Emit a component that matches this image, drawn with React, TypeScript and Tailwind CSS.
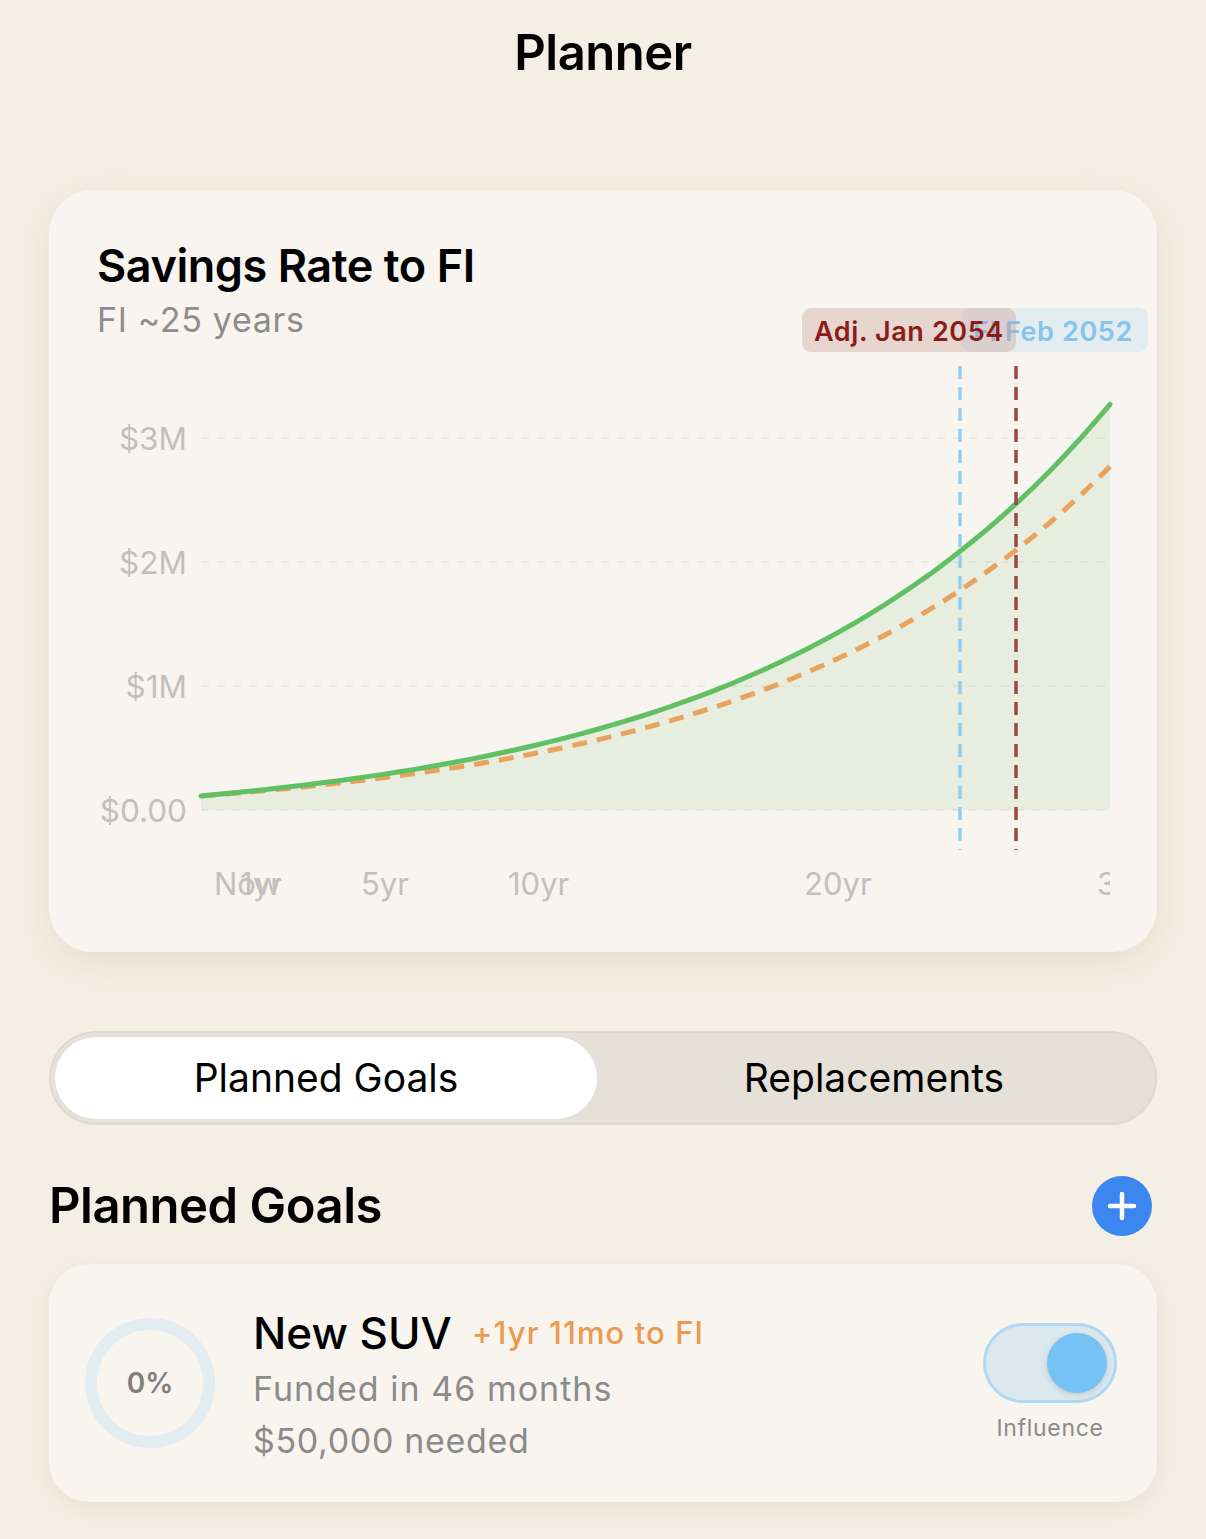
import React from 'react';

const FONT = { fontFamily: 'Inter, "Noto Sans", sans-serif' };

// simple compounding model: start balance + yearly contribution
function balance(t: number, contrib: number) {
  const g = Math.pow(1.09, t);
  return 0.113 * g + contrib * ((g - 1) / 0.09);
}

const X0 = 152;
const X1 = 1061;
const Y0 = 470;
const PER_M = 124;

const xAt = (t: number) => X0 + ((X1 - X0) * t) / 30;
const yAt = (v: number) => Y0 - v * PER_M;

function curve(contrib: number) {
  const pts: string[] = [];
  for (let i = 0; i <= 60; i++) {
    const t = (i / 60) * 30;
    pts.push(`${xAt(t).toFixed(1)},${yAt(balance(t, contrib)).toFixed(1)}`);
  }
  return pts;
}

function SavingsChart() {
  const green = curve(0.013);
  const orange = curve(0.00932);
  const area = `M${X0},${Y0} L${green.join(' L')} L${X1},${Y0} Z`;
  const yTicks = [
    { label: '$3M', y: yAt(3) },
    { label: '$2M', y: yAt(2) },
    { label: '$1M', y: yAt(1) },
    { label: '$0.00', y: Y0 },
  ];
  const xTicks = [
    { label: 'Now', x: 165 },
    { label: '1yr', x: 191 },
    { label: '5yr', x: 312 },
    { label: '10yr', x: 459 },
    { label: '20yr', x: 755 },
    { label: '30yr', x: 1048 },
  ];

  return (
    <svg width="1108" height="572" viewBox="0 0 1108 572" className="block overflow-visible" style={FONT}>
      <defs>
        <clipPath id="xclip">
          <rect x="0" y="480" width="1061" height="100" />
        </clipPath>
      </defs>

      {yTicks.map((t) => (
        <g key={t.label}>
          <line x1={X0} x2={X1} y1={t.y} y2={t.y} stroke="#e6e2dc" strokeWidth="1.5" strokeDasharray="8 8" />
          <text x="138" y={t.y} textAnchor="end" dominantBaseline="central" fontSize="31.5" fill="#c3c0bb">
            {t.label}
          </text>
        </g>
      ))}

      <path d={area} fill="#7fbf6a" fillOpacity="0.12" />
      <polyline points={orange.join(' ')} fill="none" stroke="#e9a35c" strokeWidth="5" strokeDasharray="15 10" />
      <polyline points={green.join(' ')} fill="none" stroke="#62c064" strokeWidth="5" strokeLinecap="round" />

      <line x1="911" x2="911" y1="26" y2="510" stroke="#93cdef" strokeWidth="3.5" strokeDasharray="13 8" />
      <line x1="967" x2="967" y1="26" y2="510" stroke="#9a4843" strokeWidth="3.5" strokeDasharray="13 8" />

      <g clipPath="url(#xclip)">
        {xTicks.map((t) => (
          <text key={t.label} x={t.x} y="543" dominantBaseline="central" fontSize="31" fill="#c3c0bb">
            {t.label}
          </text>
        ))}
      </g>

      {/* FI markers */}
      <rect x="913" y="-32" width="186" height="44" rx="9" fill="#dfeaef" fillOpacity="0.85" />
      <text x="924" y="1" fontSize="27" fontWeight="600" letterSpacing="0.6" fill="#84c4ee">FI Feb 2052</text>
      <rect x="753" y="-32" width="214" height="44" rx="9" fill="#c99a92" fillOpacity="0.35" />
      <text x="765" y="1" fontSize="27" fontWeight="600" letterSpacing="0.6" fill="#8a1d18">Adj. Jan 2054</text>
    </svg>
  );
}

function GoalCard() {
  return (
    <div className="flex items-center rounded-[40px] bg-[#f8f5ef] pl-[36px] pr-[40px] h-[238px] shadow-[0_6px_24px_rgba(120,100,70,0.10)]">
      <div className="relative w-[130px] h-[130px] shrink-0">
        <svg width="130" height="130" viewBox="0 0 130 130">
          <circle cx="65" cy="65" r="59" fill="none" stroke="#e3ecf0" strokeWidth="12" />
        </svg>
        <div className="absolute inset-0 flex items-center justify-center text-[28px] font-semibold text-[#7d7d7d]">0%</div>
      </div>

      <div className="ml-[38px] mt-[6px] flex-1 flex flex-col">
        <div className="flex items-center gap-[20px]">
          <span className="text-[44px] leading-[56px] font-medium text-black">New SUV</span>
          <span className="text-[31px] font-medium text-[#eb9a52] tracking-[0.035em]">+1yr 11mo to FI</span>
        </div>
        <div className="mt-[2px] text-[34px] leading-[52px] text-[#8b8b8b] tracking-[0.03em]">Funded in 46 months</div>
        <div className="text-[34px] leading-[52px] text-[#8b8b8b] tracking-[0.02em]">$50,000 needed</div>
      </div>

      <div className="flex flex-col items-center gap-[8px] mt-[2px]">
        <div className="w-[134px] h-[80px] rounded-full bg-[#dce8ee] border-[3px] border-[#afd8f2] flex items-center justify-end pr-[7px]">
          <div className="w-[60px] h-[60px] rounded-full bg-[#77c2f4] shadow-[0_2px_6px_rgba(0,0,0,0.12)]" />
        </div>
        <span className="text-[23px] text-[#8b8b8b] tracking-[0.03em]">Influence</span>
      </div>
    </div>
  );
}

export default function App() {
  return (
    <div className="min-h-[1539px] w-[1206px] bg-[#f4efe5] text-black" style={FONT}>
      <div className="pt-[22px] text-center text-[49px] leading-[62px] font-semibold tracking-[-0.01em]">Planner</div>

      <div className="mx-[49px] mt-[106px]">
        <div className="rounded-[44px] bg-[#f8f5f0] shadow-[0_10px_40px_rgba(120,100,60,0.12)] pb-[40px]">
          <div className="px-[48px] pt-[50px]">
            <div className="text-[45px] leading-[52px] font-semibold tracking-[-0.01em]">Savings Rate to FI</div>
            <div className="mt-[8px] text-[34px] leading-[40px] text-[#8d8d8d] tracking-[0.02em]">FI ~25 years</div>
          </div>
          <SavingsChart />
        </div>

        <div className="mt-[79px] h-[94px] rounded-full bg-[#e5e0d8] p-[6px] flex shadow-[inset_0_0_0_2px_rgba(0,0,0,0.03)]">
          <div className="w-[542px] rounded-full bg-white flex items-center justify-center text-[39px] text-black">Planned Goals</div>
          <div className="flex-1 flex items-center justify-center text-[39px] text-black">Replacements</div>
        </div>

        <div className="mt-[50px] flex items-center justify-between">
          <h2 className="text-[49px] leading-[62px] font-semibold tracking-[-0.01em]">Planned Goals</h2>
          <button className="w-[60px] h-[60px] rounded-full bg-[#3b86ef] flex items-center justify-center mr-[5px]">
            <svg width="30" height="30" viewBox="0 0 30 30">
              <path d="M15 3v24M3 15h24" stroke="white" strokeWidth="4.5" strokeLinecap="round" />
            </svg>
          </button>
        </div>

        <div className="mt-[27px]">
          <GoalCard />
        </div>
      </div>
    </div>
  );
}
